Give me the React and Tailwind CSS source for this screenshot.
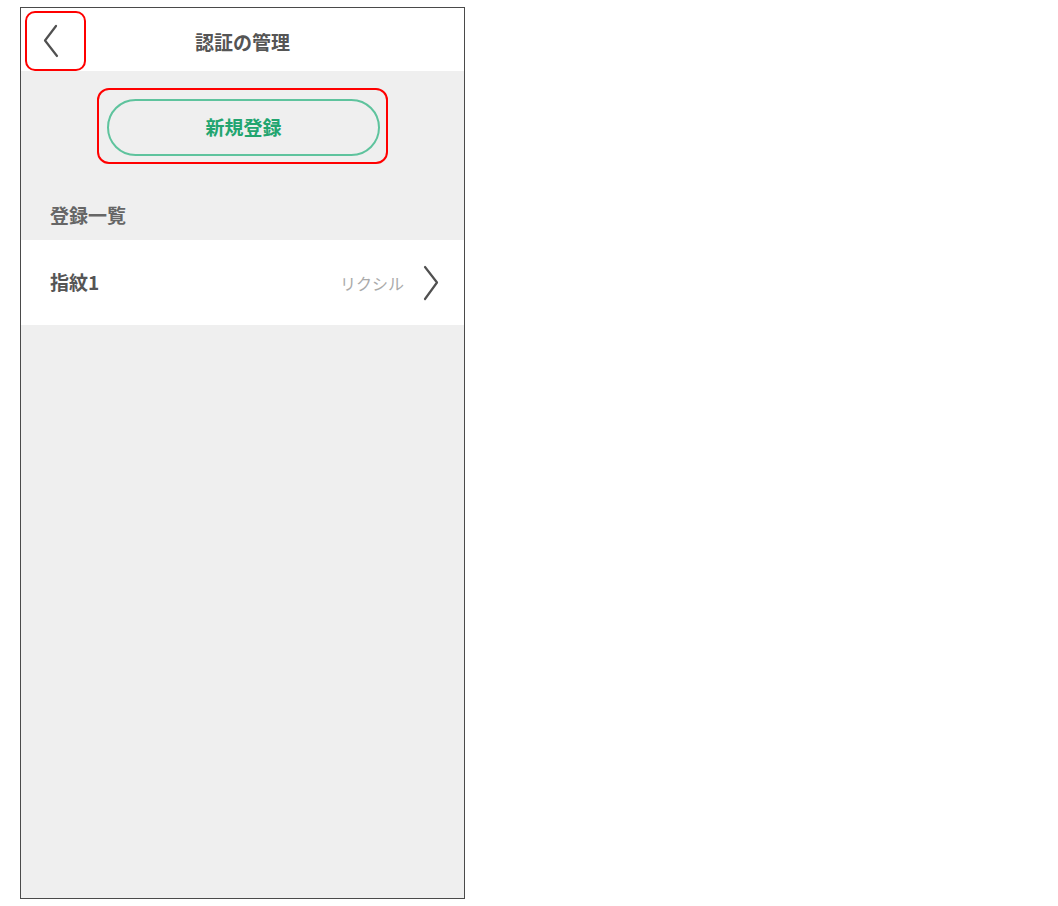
import React from "react";

const font = { fontFamily: '"Noto Sans CJK JP", "Noto Sans", sans-serif' };

function BackIcon() {
  return (
    <svg width="16" height="34" viewBox="0 0 16 34" fill="none">
      <path
        d="M13 2 L2 16.5 L14 32"
        stroke="#505050"
        strokeWidth="2.2"
        strokeLinecap="round"
        strokeLinejoin="round"
      />
    </svg>
  );
}

function NextIcon() {
  return (
    <svg width="16" height="36" viewBox="0 0 16 36" fill="none">
      <path
        d="M2 2 L14 17.5 L2 34"
        stroke="#505050"
        strokeWidth="2.2"
        strokeLinecap="round"
        strokeLinejoin="round"
      />
    </svg>
  );
}

export default function App() {
  return (
    <div className="min-h-screen bg-white pt-[7px] pl-[20px]" style={font}>
      <div className="w-[445px] h-[892px] border border-[#4a4a4a] bg-[#efefef] flex flex-col">
        {/* Header */}
        <div className="h-[63px] bg-white grid grid-cols-[70px_1fr_70px]">
          <div className="pl-[4px] pt-[3px]">
            <button className="w-[61px] h-[60px] border-2 border-[#f00] rounded-[10px] flex items-center pl-[16px]">
              <BackIcon />
            </button>
          </div>
          <h1 className="flex items-center justify-center text-[19px] font-bold text-[#555] pt-[6px]">
            認証の管理
          </h1>
          <div />
        </div>

        {/* New registration */}
        <div className="pt-[17px]">
          <div className="mx-auto w-[291px] h-[76px] border-2 border-[#f00] rounded-[12px] pl-[8px] pt-[9px]">
            <button className="w-[273px] h-[57px] border-2 border-[#5ec39d] rounded-full text-[19px] font-bold text-[#22a56f]">
              新規登録
            </button>
          </div>
        </div>

        {/* List */}
        <div className="pt-[38px] pb-[12px] pl-[29px] text-[19px] leading-[26px] font-bold text-[#666]">
          登録一覧
        </div>
        <div className="h-[85px] bg-white flex items-center justify-between pl-[29px] pr-[25px]">
          <span className="text-[19px] font-bold text-[#555]">指紋1</span>
          <div className="flex items-center gap-[19px]">
            <span className="text-[16px] text-[#aaa]">リクシル</span>
            <NextIcon />
          </div>
        </div>
      </div>
    </div>
  );
}
